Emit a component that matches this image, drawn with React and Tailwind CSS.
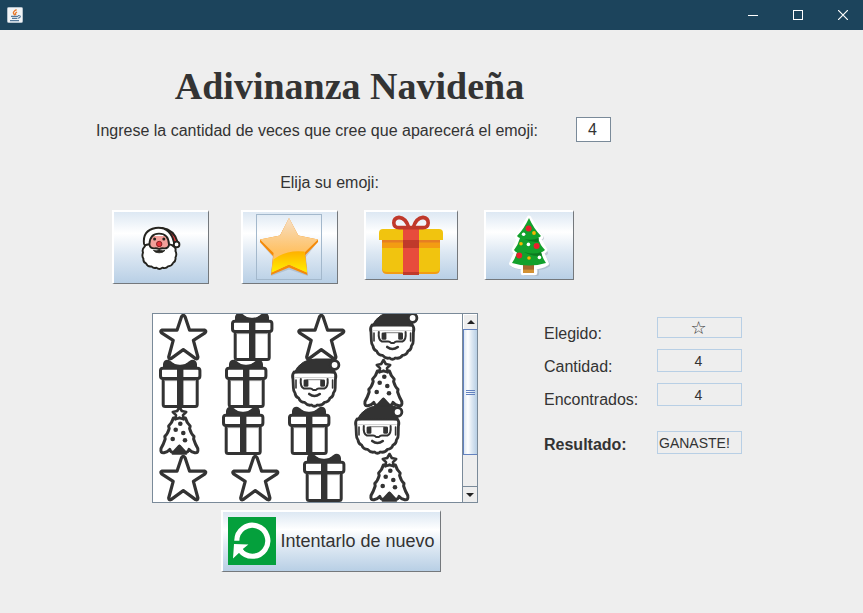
import React from "react";

const INK = "#333333";

const METAL =
  "bg-[linear-gradient(to_bottom,#dde8f3_0%,#ffffff_30%,#dde8f3_60%,#b8cfe5_100%)] border-t-2 border-l-2 border-r border-b border-t-white border-l-white border-r-[#74787c] border-b-[#74787c] flex items-center justify-center shrink-0";

const FIELD =
  "w-full border border-[#b8cfe5] bg-[#eeeeee] text-[#333333] outline-none";

/* ---------- Monochrome glyphs of the drawn board ---------- */

function StarGlyph() {
  return (
    <svg width="48" height="50" viewBox="0 0 48 50" className="shrink-0 overflow-visible" fill="#fff" stroke={INK} strokeWidth="3.2" strokeLinejoin="round">
      <path d="M22.6 4.6Q24.3 2 26 4.6L30.6 18.2L45.4 18Q47.8 19 46 20.8L34.4 28.4L38.9 45Q38.6 47.4 36.6 46.6L24.3 37.6L12 46.6Q10 47.4 9.7 45L14.2 28.4L2.6 20.8Q.8 19 3.2 18L18 18.2Z" />
    </svg>
  );
}

function GiftGlyph() {
  return (
    <svg width="42" height="50" viewBox="0 0 42 50" className="shrink-0 overflow-visible">
      <path d="M4 10V5Q5 0 10 1L16 5Q21 6.5 26 5L32 1Q37 0 38 5V10Z" fill={INK} />
      <path d="M13 3Q21 1.4 29 3Q21 7.6 13 3Z" fill="#fff" />
      <rect x="4.2" y="19" width="34" height="28.5" rx="2" fill="#fff" stroke={INK} strokeWidth="3" />
      <rect x="1.5" y="9.2" width="39.4" height="10.3" rx="2.4" fill="#fff" stroke={INK} strokeWidth="3" />
      <path d="M5.7 21.6H36.7" stroke="#8a8a8a" strokeWidth="1" />
      <rect x="18" y="8" width="6.4" height="40" fill={INK} />
    </svg>
  );
}

function SantaGlyph() {
  return (
    <svg width="48" height="50" viewBox="0 0 48 50" className="shrink-0 overflow-visible" strokeLinecap="round" strokeLinejoin="round">
      <path d="M3 13Q.6 16 2 20.4L2.4 29Q2.4 32.4 4 34Q4.4 38 7.6 39Q9.4 43.4 13.6 43.4Q16.6 47 20.6 46Q23.4 48.6 26.2 46Q31 47 33.4 43.4Q37.6 43 39 39Q42.4 38 42.4 34Q44.4 32 44.2 29L44.4 20.4Q45.8 16 43.4 13Z" fill="#fff" stroke={INK} strokeWidth="2.8" />
      <path d="M3 14Q6 7 12 3.4Q17 0 25 0H41L44 8L43.4 14Q24 11 3 14Z" fill={INK} stroke={INK} strokeWidth="1" />
      <circle cx="43.6" cy="6" r="4.3" fill="#fff" stroke={INK} strokeWidth="2.8" />
      <path d="M5 21V29M41.6 21V29" fill="none" stroke={INK} strokeWidth="1.6" />
      <path d="M9.8 20Q9 28 13 29.6H19.2Q21 29.6 22 31H25Q26 29.6 27.8 29.6H33.4Q37.4 28 36.6 20" fill="none" stroke={INK} strokeWidth="2" />
      <path d="M4 18.6H42.4" stroke="#cfcfcf" strokeWidth="1" />
      <path d="M16 20.6H30" stroke="#999" strokeWidth="1.2" />
      <rect x="12.6" y="20.4" width="4.8" height="7.4" rx="1.4" fill={INK} />
      <rect x="29.2" y="20.4" width="4.8" height="7.4" rx="1.4" fill={INK} />
      <path d="M18.2 35Q23.4 39 28.8 35" fill="none" stroke={INK} strokeWidth="2.6" />
    </svg>
  );
}

function TreeGlyph() {
  return (
    <svg width="39" height="50" viewBox="0 0 39 50" className="shrink-0 overflow-visible" strokeLinejoin="round" strokeLinecap="round">
      <path d="M14.4 12Q13 17 9.6 20L10.2 22.6Q8.6 28 5.8 30.4L6.2 33Q4.6 38 2 42.6Q1.2 47.4 5 46.8Q9 45.8 10.8 43.4Q12 47 14.6 46.2L20.4 40L26.2 46.2Q28.8 47 30 43.4Q31.8 45.8 35.8 46.8Q39.6 47.4 38.8 42.6Q36.2 38 34.6 33L35 30.4Q32.2 28 30.6 22.6L31.2 20Q27.8 17 26.4 12Z" fill="#fff" stroke={INK} strokeWidth="3" />
      <path d="M20.4 38.6L28.2 48.8H12.6Z" fill={INK} />
      <path d="M20.5 1L22.8 5L27.2 6L24 9.2L24.6 13.4L20.5 11.6L16.4 13.4L17 9.2L13.8 6L18.2 5Z" fill="#fff" stroke={INK} strokeWidth="2.6" />
      <g fill={INK}>
        <circle cx="21.3" cy="17.7" r="2.3" />
        <circle cx="16.7" cy="23.7" r="2.3" />
        <circle cx="24.3" cy="27" r="2.3" />
        <circle cx="13.7" cy="33" r="2.3" />
        <circle cx="26" cy="34.3" r="2.3" />
      </g>
    </svg>
  );
}

const GLYPHS = { star: StarGlyph, gift: GiftGlyph, santa: SantaGlyph, tree: TreeGlyph };

const BOARD = [
  ["star", "gift", "star", "santa"],
  ["gift", "gift", "santa", "tree"],
  ["tree", "gift", "gift", "santa"],
  ["star", "star", "gift", "tree"],
];

/* ---------- Coloured button icons ---------- */

function SantaIcon() {
  return (
    <svg width="40" height="46" viewBox="0 0 40 46" stroke="#25241f" strokeWidth="1.9" strokeLinejoin="round">
      <path d="M21 3Q33 4.6 36.6 17L31 21Z" fill="#e03a3c" />
      <path d="M8 11H29V28H8Z" fill="#f4a09a" stroke="none" />
      <path d="M3 19Q1.4 5.4 14.6 3Q29 1.2 33 17.4Q33.8 20.8 31.4 20.4L28 19.5Q27.6 8.6 18 8.6Q9 8.6 8.4 19Q4 21.6 3 19Z" fill="#fff" />
      <path d="M8.4 19.6Q4 19 3.4 22Q.8 24 2 27.6Q.6 31 2.4 33.6Q2 37 5 38.4Q6.6 42 10.4 41.4Q13 44 15.4 42.6Q18.4 45.4 21.4 42.6Q25 44 27 41.4Q31 41 32 38Q35.2 36 34.4 32.6Q36.2 29 34.4 26Q35.4 22.4 32 21Q29.6 19 28 20Q27.2 23.6 23 23.4Q20.4 23 18.2 24Q16 23 13.4 23.4Q9.2 23.6 8.4 19.6Z" fill="#fff" />
      <path d="M12.4 25.4Q15.4 26.4 18.2 24.8Q21 26.4 24 25.4Q22 28 18.2 27.8Q14.4 28 12.4 25.4Z" fill="#25241f" strokeWidth=".8" />
      <circle cx="18.2" cy="19" r="2.7" fill="#e8353b" stroke="#7c1f20" strokeWidth=".9" />
      <circle cx="13.6" cy="14" r="1.5" fill="#25241f" stroke="none" />
      <circle cx="22.8" cy="14" r="1.5" fill="#25241f" stroke="none" />
      <circle cx="35.6" cy="19.4" r="2.8" fill="#fff" />
    </svg>
  );
}

function StarIcon() {
  return (
    <svg width="64" height="64" viewBox="0 0 64 64">
      <defs>
        <linearGradient id="starTop" x1="0" y1="0" x2="0" y2="1">
          <stop offset="0" stopColor="#f6dfc6" />
          <stop offset=".6" stopColor="#ffc266" />
        </linearGradient>
        <linearGradient id="starLow" x1="0" y1="0" x2="0" y2="1">
          <stop offset="0" stopColor="#ffb000" />
          <stop offset="1" stopColor="#fff000" />
        </linearGradient>
      </defs>
      <path d="M32 4L42 22.5L61.5 26L49 42L51 61L32 54.4L14 61L16 42L2.5 27L22 22Z" fill="#8b95a0" opacity=".35" />
      <path d="M32 3L41.4 20.6L61 24.6V27L48.4 40L50.4 60L32 52.4L14 60L16 41L3 27V24.6L23 20.6Z" fill="#f58a08" />
      <path d="M32 3L41.4 20.4L61 24.6L47.6 37.4L50 57.6L32 49.6L14.6 57.6L16.6 38L3 24.6L23 20.4Z" fill="url(#starTop)" />
      <path d="M16.4 44.6Q29 34.4 47.6 36.6L50 57.6L32 49.6L14.6 57.6Z" fill="url(#starLow)" />
    </svg>
  );
}

function GiftIcon() {
  return (
    <svg width="64" height="62" viewBox="0 0 64 62">
      <path d="M3 26H61V54Q61 59 56 59H8Q3 59 3 54Z" fill="#f39c12" />
      <path d="M3 26H61V53Q61 57 56 57H8Q3 57 3 53Z" fill="#f1c40f" />
      <path d="M3 25H61V33H3Z" fill="#f39c12" />
      <path d="M3 25H61V27.4H3Z" fill="#e67e22" />
      <path d="M4 14H60Q64 14 64 18V25H0V18Q0 14 4 14Z" fill="#f1c40f" />
      <path d="M24 14H40V60H24Z" fill="#e74c3c" />
      <path d="M24 25H40V33H24ZM24 57H40V60H24Z" fill="#c0392b" />
      <g fill="none" stroke="#c0392b" strokeWidth="3.6" strokeLinejoin="round">
        <path d="M30 13Q27 3 20 2.4Q14.8 3 14.8 8Q15 12.6 20 12.6H44Q49 12.6 49.2 8Q49.2 3 44 2.4Q37 3 34 13" />
      </g>
    </svg>
  );
}

function TreeIcon() {
  return (
    <svg width="44" height="64" viewBox="0 0 44 64">
      <path d="M23 6L35 24L32 27L39 39L36 41L41 51Q36 54 30 54V60H18V54Q9 54 5 51L11 41L8 39L15 27L12 24Z" fill="#98a5b2" stroke="#98a5b2" strokeWidth="4" strokeLinejoin="round" opacity=".45" />
      <path d="M22 4L34 23L32 25L38 36L35 39L39.6 49.6Q34 53 28 53V59H16V53Q8 53 4.4 49.6L9 39L7 36L12 25L10 23Z" fill="#fff" stroke="#fff" strokeWidth="4.6" strokeLinejoin="round" />
      <path d="M16 50H27V59H16Z" fill="#a5662f" />
      <path d="M16 55.6H27V59H16Z" fill="#d39132" />
      <path d="M22 4Q27 15 34 22Q33 23 31 24Q33 31 38 36Q36 38 34 38.4Q36 45 39 49Q22 54 5 49Q8 45 10 38.4Q8 38 7 36Q11 31 13 24Q11 23.4 10 22Q17 15 22 4Z" fill="#12a12c" />
      <path d="M17 25Q25 27 32 24L31 28Q24 28.4 17 25ZM17 38Q27 41 34 38L35 41.6Q26 43 17 38Z" fill="#0b7a20" />
      <circle cx="21.6" cy="14.6" r="3" fill="#e8202c" />
      <circle cx="29.6" cy="32" r="3" fill="#e8202c" />
      <circle cx="12.2" cy="41.6" r="3" fill="#e8202c" />
      <circle cx="27" cy="19" r="1.9" fill="#f7b500" />
      <circle cx="14" cy="29.8" r="1.8" fill="#f7b500" />
      <circle cx="22" cy="44" r="1.8" fill="#f7b500" />
      <circle cx="16.6" cy="20.2" r="1.8" fill="#fff" />
      <circle cx="21.4" cy="30.4" r="1.8" fill="#fff" />
      <circle cx="32.4" cy="43.4" r="1.8" fill="#fff" />
    </svg>
  );
}

function RetryIcon() {
  return (
    <svg width="48" height="48" viewBox="0 0 48 48" className="shrink-0">
      <rect width="48" height="48" fill="#04a03c" />
      <path d="M8.8 23.7A15.5 15.5 0 1 1 12 33.2" fill="none" stroke="#fff" strokeWidth="5.2" />
      <path d="M6 27L20.4 27.4L14.8 32L17.6 36.4L11.4 35.4L5 41.4Z" fill="#fff" />
    </svg>
  );
}

function JavaIcon() {
  return (
    <svg width="16" height="16" viewBox="0 0 16 16" role="img" aria-label="Java">
      <rect x=".5" y=".5" width="15" height="15" rx="1" fill="#f1f4f6" stroke="#b4c2cc" />
      <path d="M9.6 2.6Q6 4.6 6.4 6Q6.6 7 8 8.2M10 5Q7.6 6.2 9 8" fill="none" stroke="#e8792b" strokeWidth="1.3" />
      <path d="M4 9.4H11M5 11.4H10.4M3 13.6H12M11 8.6Q14 8.4 13.2 10Q12.6 11 11 11.2" fill="none" stroke="#54799a" strokeWidth="1.1" />
    </svg>
  );
}

/* ---------- Window parts ---------- */

function TitleBar() {
  const control = "flex h-full w-10 items-center justify-center";
  return (
    <header className="flex h-[30px] items-center justify-between bg-[#1c445c] pl-[7px]">
      <JavaIcon />
      <div className="flex h-full gap-[5px] pb-px text-white">
        <button className={control} aria-label="Minimizar">
          <svg width="10" height="10" viewBox="0 0 10 10" stroke="#fff" fill="none"><path d="M0 5.5H10" /></svg>
        </button>
        <button className={control} aria-label="Maximizar">
          <svg width="10" height="10" viewBox="0 0 10 10" stroke="#fff" fill="none"><rect x=".5" y=".5" width="9" height="9" /></svg>
        </button>
        <button className={control} aria-label="Cerrar">
          <svg width="10" height="10" viewBox="0 0 10 10" stroke="#fff" fill="none" strokeWidth="1.2"><path d="M0 0L10 10M10 0L0 10" /></svg>
        </button>
      </div>
    </header>
  );
}

function ScrollBar() {
  return (
    <div className="flex w-[15px] shrink-0 flex-col border-l border-[#7a8a99] bg-[#eeeeee]">
      <button className="flex h-[15px] w-full items-center justify-center border-t border-l border-white" aria-label="Subir">
        <svg width="8" height="4" viewBox="0 0 8 4"><path d="M4 0L8 4H0Z" fill="#222" /></svg>
      </button>
      <div className="flex h-[126px] flex-col items-center justify-center gap-px border-y border-l border-[#6382bf] bg-[linear-gradient(to_right,#dde8f3_0%,#ffffff_30%,#dde8f3_60%,#b8cfe5_100%)]">
        <span className="h-px w-[9px] bg-[#6382bf]" />
        <span className="h-px w-[9px] bg-[#6382bf]" />
        <span className="h-px w-[9px] bg-[#6382bf]" />
      </div>
      <div className="grow" />
      <button className="flex h-[16px] w-full items-center justify-center border-t border-[#7a8a99]" aria-label="Bajar">
        <svg width="8" height="4" viewBox="0 0 8 4"><path d="M0 0H8L4 4Z" fill="#222" /></svg>
      </button>
    </div>
  );
}

function Board() {
  return (
    <div className="flex h-[190px] w-[326px] shrink-0 overflow-hidden border border-[#7a8a99] bg-white">
      <div className="-mt-0.5 grow pl-1.5" role="img" aria-label="Emojis sorteados">
        {BOARD.map((row, i) => (
          <div key={i} className="flex h-[47px] gap-6">
            {row.map((name, j) => {
              const Glyph = GLYPHS[name];
              return <Glyph key={j} />;
            })}
          </div>
        ))}
      </div>
      <ScrollBar />
    </div>
  );
}

function Results() {
  return (
    <div className="flex pt-1">
      <div className="flex w-[113px] flex-col text-base leading-[33px]">
        <label htmlFor="elegido">Elegido:</label>
        <label htmlFor="cantidad">Cantidad:</label>
        <label htmlFor="encontrados">Encontrados:</label>
        <label htmlFor="resultado" className="mt-3 font-bold">Resultado:</label>
      </div>
      <div className="flex w-[85px] flex-col gap-[11px] text-sm">
        <input id="elegido" readOnly defaultValue="☆" className={`${FIELD} h-[21px] pr-0.5 text-center text-lg font-['DejaVu_Sans',sans-serif]`} />
        <input id="cantidad" readOnly defaultValue="4" className={`${FIELD} h-[23px] pr-0.5 text-center`} />
        <input id="encontrados" readOnly defaultValue="4" className={`${FIELD} h-[23px] pr-0.5 text-center`} />
        <input id="resultado" readOnly defaultValue="GANASTE!" className={`${FIELD} mt-3.5 h-[23px] pl-px`} />
      </div>
    </div>
  );
}

export default function App() {
  return (
    <div className="flex min-h-screen flex-col bg-[#eeeeee] font-['Liberation_Sans',Arial,sans-serif] text-[#333333]">
      <TitleBar />
      <main className="flex flex-col pl-24">
        <div className="flex max-w-[515px] flex-col">
          <h1 className="pt-8 pr-2 text-center font-['Liberation_Serif',serif] text-[38px] leading-[48px] font-bold whitespace-nowrap">
            Adivinanza Navideña
          </h1>
          <div className="mt-[7px] flex items-center justify-between">
            <label htmlFor="veces" className="pt-0.5 text-base leading-[23px]">
              Ingrese la cantidad de veces que cree que aparecerá el emoji:
            </label>
            <input id="veces" defaultValue="4" className="h-[25px] w-[35px] border border-[#7a8a99] bg-white pr-0.5 text-center text-base outline-none" />
          </div>
          <p className="mt-[29px] pr-12 text-center text-base">Elija su emoji:</p>
        </div>

        <div className="mt-[15px] flex items-start gap-[26px] pl-4">
          <div className="flex gap-8">
            <button className={`${METAL} h-[74px] w-[97px]`} aria-label="Papá Noel"><SantaIcon /></button>
            <button className={`${METAL} h-[74px] w-[97px] pr-0.5 pb-0.5`} aria-label="Estrella">
              <span className="border border-[#a3b8cc]"><StarIcon /></span>
            </button>
          </div>
          <button className={`${METAL} h-[70px] w-[94px] pr-0.5`} aria-label="Regalo"><GiftIcon /></button>
          <button className={`${METAL} h-[70px] w-[90px] pr-0.5`} aria-label="Árbol"><TreeIcon /></button>
        </div>

        <div className="mt-[29px] flex items-start gap-[66px] pl-14">
          <Board />
          <Results />
        </div>

        <div className="mt-[7px] flex max-w-[470px] justify-center">
          <button className={`${METAL} h-[62px] w-[220px] gap-1 pb-0.5 text-lg`}>
            <RetryIcon />
            Intentarlo de nuevo
          </button>
        </div>
      </main>
    </div>
  );
}
